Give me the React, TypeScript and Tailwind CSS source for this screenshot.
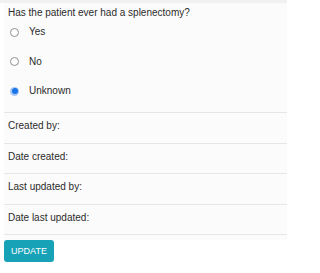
import React from "react";

const options = [
  { label: "Yes", checked: false },
  { label: "No", checked: false },
  { label: "Unknown", checked: true },
];

const audit = ["Created by:", "Date created:", "Last updated by:", "Date last updated:"];

const Radio = ({ checked }: { checked: boolean }) => {
  if (checked) {
    return (
      <span className="flex items-center justify-center w-[9px] h-[9px] rounded-full bg-[#a9c8f5]">
        <span className="w-[6px] h-[6px] rounded-full bg-[#1a73e8]" />
      </span>
    );
  }
  return <span className="w-[9px] h-[9px] rounded-full border border-[#8f8f8f] bg-white" />;
};

const App = () => {
  return (
    <div className="w-[287px] h-[273px] bg-white text-[#2b2b2b] text-[10px] font-['Liberation_Sans',Arial,sans-serif] overflow-hidden">
      <div className="h-[3px] bg-[#f1f1f1]" />
      <div className="ml-1 bg-[#fbfbfb]">
        <div className="pl-1 pt-[3px] h-[17px] leading-[14px]">Has the patient ever had a splenectomy?</div>
        <div className="flex flex-col pb-[3.5px]">
          {options.map((o) => (
            <label key={o.label} className="flex items-start h-[29.5px] pt-[5px] leading-[14px]">
              <span className="w-[25px] h-[14px] pl-[6px] flex items-center">
                <Radio checked={o.checked} />
              </span>
              <span>{o.label}</span>
            </label>
          ))}
        </div>
        {audit.map((a) => (
          <div key={a} className="border-t border-[#e6e6e6] h-[30.5px] pl-1 pt-[6px] leading-[14px]">
            {a}
          </div>
        ))}
        <div className="border-t border-[#e6e6e6] h-[6px]" />
      </div>
      <div className="pl-1">
        <button className="w-[50px] h-[22px] rounded-[3px] bg-[#17a2b8] text-white text-[9px] leading-none">
          UPDATE
        </button>
      </div>
    </div>
  );
};

export default App;
